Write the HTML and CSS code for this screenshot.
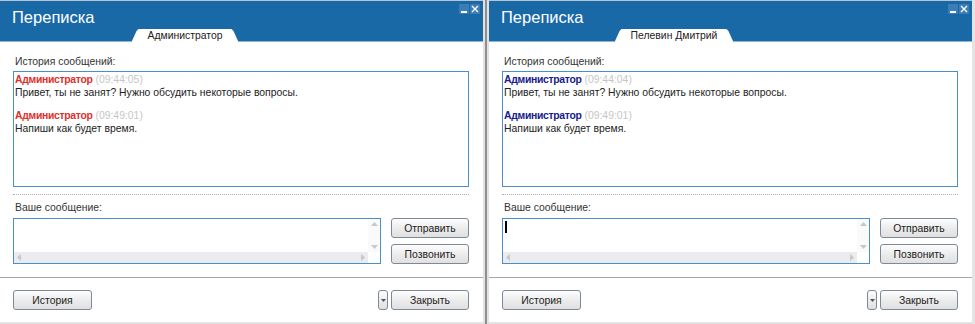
FILE: index.html
```html
<!DOCTYPE html>
<html lang="ru">
<head>
    <meta charset="UTF-8">
    <title>Переписка</title>
    <link rel="stylesheet" href="styles.css">
</head>
<body>
    <div class="desk">
        <div class="window">
            <div class="titlebar">
                <div class="title-row">
                    <span class="title">Переписка</span>
                    <div class="controls">
                        <span class="ctl"><svg width="10" height="10" viewBox="0 0 10 10"><rect x="2" y="7" width="6" height="2" fill="#fff"/></svg></span>
                        <span class="ctl"><svg width="10" height="10" viewBox="0 0 10 10"><path d="M2 2 L8 8 M8 2 L2 8" stroke="#fff" stroke-width="1.4"/></svg></span>
                    </div>
                </div>
                <div class="tabs"><span class="tab">Администратор</span></div>
            </div>
            <div class="content">
                <div class="label">История сообщений:</div>
                <div class="history">
                    <div class="msg">
                        <div><b class="author red">Администратор</b> <span class="time">(09:44:05)</span></div>
                        <div>Привет, ты не занят? Нужно обсудить некоторые вопросы.</div>
                    </div>
                    <div class="msg">
                        <div><b class="author red">Администратор</b> <span class="time">(09:49:01)</span></div>
                        <div>Напиши как будет время.</div>
                    </div>
                </div>
                <div class="divider"></div>
                <div class="label">Ваше сообщение:</div>
                <div class="compose">
                    <div class="input">
                        <div class="text"></div>
                        <div class="vscroll">
                            <svg width="7" height="4" viewBox="0 0 7 4"><path d="M0 4 L3.5 0 L7 4Z" fill="#c8c8c8"/></svg>
                            <svg width="7" height="4" viewBox="0 0 7 4"><path d="M0 0 L3.5 4 L7 0Z" fill="#c8c8c8"/></svg>
                        </div>
                        <div class="hscroll">
                            <svg width="4" height="7" viewBox="0 0 4 7"><path d="M4 0 L0 3.5 L4 7Z" fill="#c8c8c8"/></svg>
                            <svg width="4" height="7" viewBox="0 0 4 7"><path d="M0 0 L4 3.5 L0 7Z" fill="#c8c8c8"/></svg>
                        </div>
                        <div class="corner"></div>
                    </div>
                    <div class="actions">
                        <button class="btn">Отправить</button>
                        <button class="btn">Позвонить</button>
                    </div>
                </div>
            </div>
            <div class="footer">
                <button class="btn btn-wide">История</button>
                <div class="spacer"></div>
                <button class="btn drop"><svg width="5" height="3" viewBox="0 0 5 3"><path d="M0 0 L2.5 3 L5 0Z" fill="#555"/></svg></button>
                <button class="btn">Закрыть</button>
            </div>
        </div>

        <div class="splitter"></div>

        <div class="window">
            <div class="titlebar">
                <div class="title-row">
                    <span class="title">Переписка</span>
                    <div class="controls">
                        <span class="ctl"><svg width="10" height="10" viewBox="0 0 10 10"><rect x="2" y="7" width="6" height="2" fill="#fff"/></svg></span>
                        <span class="ctl"><svg width="10" height="10" viewBox="0 0 10 10"><path d="M2 2 L8 8 M8 2 L2 8" stroke="#fff" stroke-width="1.4"/></svg></span>
                    </div>
                </div>
                <div class="tabs"><span class="tab">Пелевин Дмитрий</span></div>
            </div>
            <div class="content">
                <div class="label">История сообщений:</div>
                <div class="history">
                    <div class="msg">
                        <div><b class="author blue">Администратор</b> <span class="time">(09:44:04)</span></div>
                        <div>Привет, ты не занят? Нужно обсудить некоторые вопросы.</div>
                    </div>
                    <div class="msg">
                        <div><b class="author blue">Администратор</b> <span class="time">(09:49:01)</span></div>
                        <div>Напиши как будет время.</div>
                    </div>
                </div>
                <div class="divider"></div>
                <div class="label">Ваше сообщение:</div>
                <div class="compose">
                    <div class="input">
                        <div class="text"><span class="caret"></span></div>
                        <div class="vscroll">
                            <svg width="7" height="4" viewBox="0 0 7 4"><path d="M0 4 L3.5 0 L7 4Z" fill="#c8c8c8"/></svg>
                            <svg width="7" height="4" viewBox="0 0 7 4"><path d="M0 0 L3.5 4 L7 0Z" fill="#c8c8c8"/></svg>
                        </div>
                        <div class="hscroll">
                            <svg width="4" height="7" viewBox="0 0 4 7"><path d="M4 0 L0 3.5 L4 7Z" fill="#c8c8c8"/></svg>
                            <svg width="4" height="7" viewBox="0 0 4 7"><path d="M0 0 L4 3.5 L0 7Z" fill="#c8c8c8"/></svg>
                        </div>
                        <div class="corner"></div>
                    </div>
                    <div class="actions">
                        <button class="btn">Отправить</button>
                        <button class="btn">Позвонить</button>
                    </div>
                </div>
            </div>
            <div class="footer">
                <button class="btn btn-wide">История</button>
                <div class="spacer"></div>
                <button class="btn drop"><svg width="5" height="3" viewBox="0 0 5 3"><path d="M0 0 L2.5 3 L5 0Z" fill="#555"/></svg></button>
                <button class="btn">Закрыть</button>
            </div>
        </div>
    </div>
</body>
</html>
```

FILE: styles.css
```css
body {
    margin: 0;
    background: #e4e4e4;
    font-family: 'Liberation Sans', Arial, sans-serif;
    font-size: 10.4px;
    color: #222;
}

.desk {
    display: flex;
    height: 324px;
}

.window {
    width: 483px;
    height: 322px;
    background: #fff;
    display: flex;
    flex-direction: column;
}

.splitter {
    width: 6px;
    background: linear-gradient(to right, #e2e2e2 2px, #8f8f8f 2px, #8f8f8f 4px, #e2e2e2 4px);
}

.titlebar {
    background: #1a69a7;
    border-top: 1px solid #b9c5d0;
    border-bottom: 1px solid #8db5d8;
}

.title-row {
    height: 28px;
    display: flex;
    justify-content: space-between;
    align-items: flex-start;
}

.title {
    color: #fff;
    font-size: 16.5px;
    line-height: 20px;
    padding: 6px 0 0 12px;
}

.controls {
    display: flex;
    gap: 1px;
    margin: 3px 3px 0 0;
}

.ctl {
    width: 10px;
    height: 10px;
    background: #3a7db7;
    display: flex;
}

.tabs {
    width: 370px;
    height: 12px;
    display: flex;
    justify-content: center;
    align-items: flex-end;
}

.tab {
    height: 13px;
    margin-bottom: -1px;
    padding: 0 16px;
    line-height: 14px;
    background: #fff;
    color: #222;
    clip-path: polygon(0 100%, 5px 2px, 7px 0, calc(100% - 7px) 0, calc(100% - 5px) 2px, 100% 100%);
}

.content {
    padding: 13px 14px 13px 13px;
}

.label {
    line-height: 13px;
    color: #333;
    margin-bottom: 3px;
    padding-left: 2px;
}

.history {
    box-sizing: border-box;
    height: 116px;
    border: 1px solid #4a8fc9;
    padding: 1px 1px;
    line-height: 13px;
}

.msg {
    margin-bottom: 10px;
}

.author {
    font-weight: bold;
    letter-spacing: -0.3px;
}

.red {
    color: #dd2f2b;
}

.blue {
    color: #16208c;
}

.time {
    color: #c6c6c6;
}

.divider {
    margin-top: 7px;
    border-top: 1px dotted #b0b0b0;
}

.divider + .label {
    margin-top: 6px;
    margin-bottom: 4px;
}

.compose {
    display: flex;
    gap: 10px;
    height: 46px;
}

.input {
    flex: 1;
    border: 1px solid #4a8fc9;
    display: grid;
    grid-template-columns: 1fr 12px;
    grid-template-rows: 1fr 11px;
}

.text {
    padding: 2px 2px;
}

.caret {
    display: block;
    width: 2px;
    height: 12px;
    background: #000;
}

.vscroll {
    background: #fafafa;
    display: flex;
    flex-direction: column;
    justify-content: space-between;
    align-items: center;
    padding: 3px 0;
}

.hscroll {
    background: #ebebf0;
    display: flex;
    justify-content: space-between;
    align-items: center;
    padding: 0 3px;
}

.corner {
    background: #fff;
}

.actions {
    width: 78px;
    display: flex;
    flex-direction: column;
    gap: 6px;
}

.btn {
    box-sizing: border-box;
    width: 78px;
    height: 20px;
    padding: 0;
    border: 1px solid #7d8898;
    border-radius: 3px;
    background: linear-gradient(#fdfdfd, #ebebeb 55%, #e0e0e0);
    font-family: inherit;
    font-size: 10.4px;
    color: #222;
}

.btn-wide {
    width: 79px;
}

.drop {
    width: 10px;
    display: flex;
    align-items: center;
    justify-content: center;
}

.footer {
    border-top: 1px solid #a6a6a6;
    padding: 12px 14px 0 13px;
    display: flex;
    gap: 3px;
}

.spacer {
    flex: 1;
}
```
